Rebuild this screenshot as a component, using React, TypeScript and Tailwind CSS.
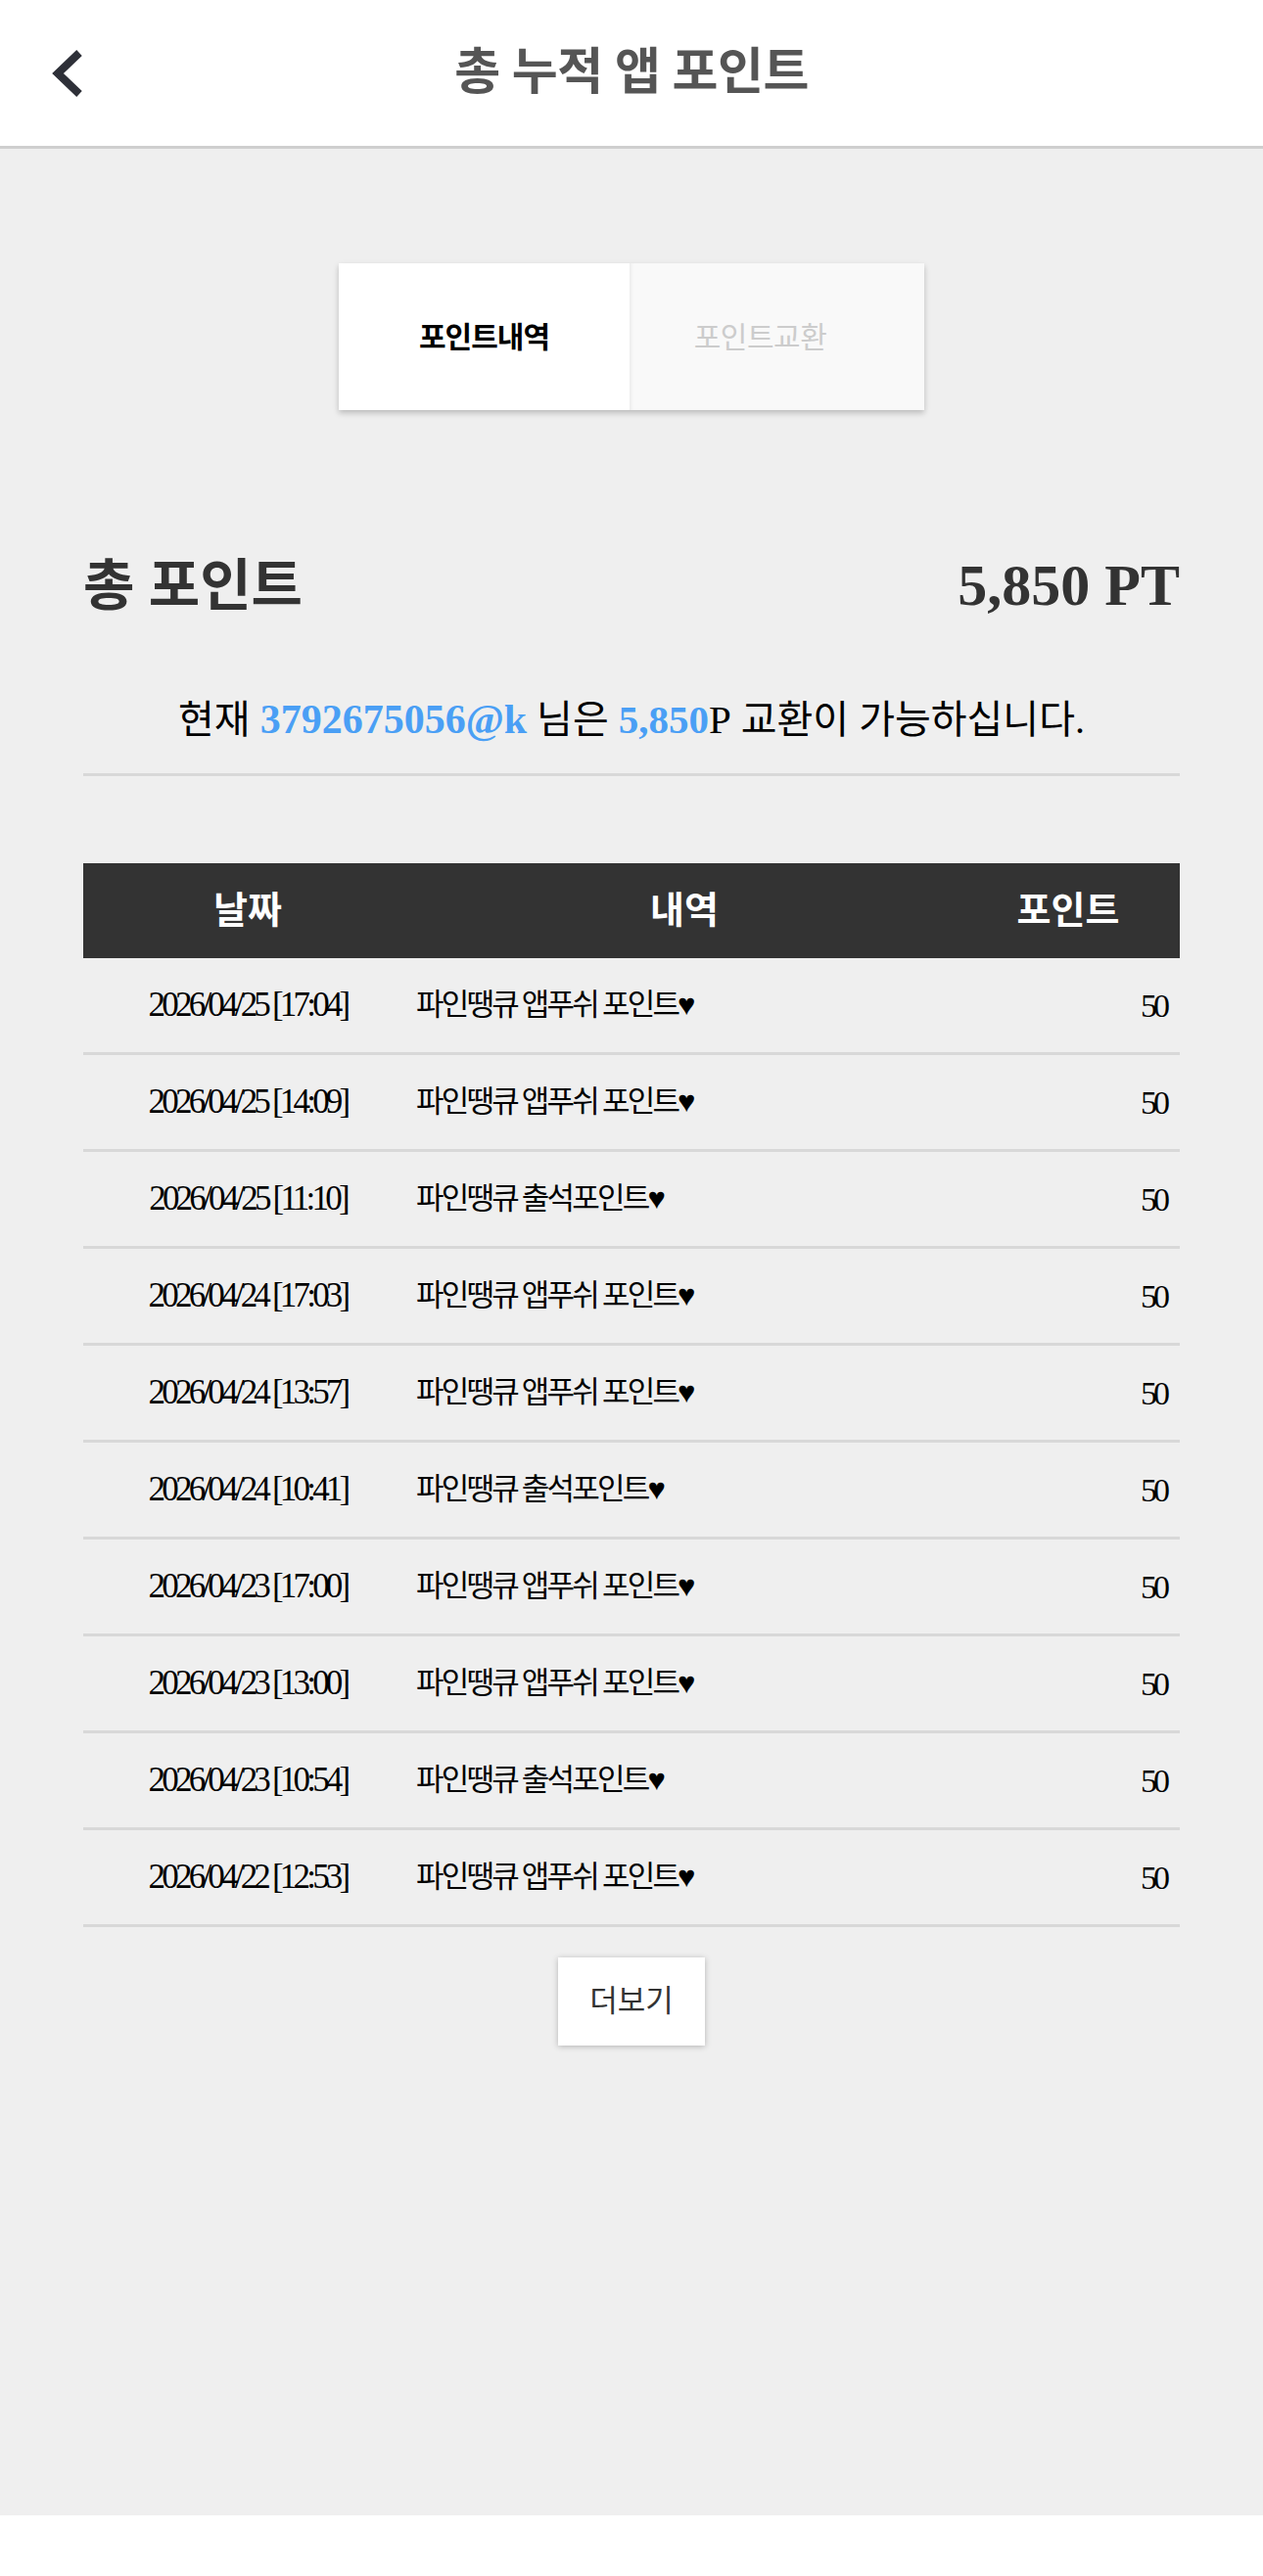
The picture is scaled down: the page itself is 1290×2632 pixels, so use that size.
import React from 'react';

const FONT = '"Liberation Serif", "Noto Sans CJK KR", serif';

const rows = [
  { date: '2026/04/25 [17:04]', text: '파인땡큐 앱푸쉬 포인트♥', point: 50 },
  { date: '2026/04/25 [14:09]', text: '파인땡큐 앱푸쉬 포인트♥', point: 50 },
  { date: '2026/04/25 [11:10]', text: '파인땡큐 출석포인트♥', point: 50 },
  { date: '2026/04/24 [17:03]', text: '파인땡큐 앱푸쉬 포인트♥', point: 50 },
  { date: '2026/04/24 [13:57]', text: '파인땡큐 앱푸쉬 포인트♥', point: 50 },
  { date: '2026/04/24 [10:41]', text: '파인땡큐 출석포인트♥', point: 50 },
  { date: '2026/04/23 [17:00]', text: '파인땡큐 앱푸쉬 포인트♥', point: 50 },
  { date: '2026/04/23 [13:00]', text: '파인땡큐 앱푸쉬 포인트♥', point: 50 },
  { date: '2026/04/23 [10:54]', text: '파인땡큐 출석포인트♥', point: 50 },
  { date: '2026/04/22 [12:53]', text: '파인땡큐 앱푸쉬 포인트♥', point: 50 },
];

function Header() {
  return (
    <header className="grid h-[152px] grid-cols-[1fr_auto_1fr] items-center border-b-[3px] border-[#cfcfcf] bg-white">
      <button className="flex items-center pl-[53px]" aria-label="back">
        <svg width="32" height="48" viewBox="0 0 32 48" fill="none">
          <polyline points="28,3 6,24 28,45" stroke="#2e3038" strokeWidth="8" strokeLinejoin="miter" />
        </svg>
      </button>
      <h1 className="text-[51px] font-bold tracking-[-0.5px] text-[#555555]">총 누적 앱 포인트</h1>
      <div />
    </header>
  );
}

function Tabs() {
  return (
    <div className="mx-auto mt-[117px] flex h-[150px] w-[598px] shadow-[0_3px_6px_rgba(0,0,0,0.22)]">
      <button className="flex w-[297px] items-center justify-center bg-white text-[30px] font-bold tracking-[-1px] text-black">
        포인트내역
      </button>
      <button className="flex flex-1 items-center justify-center bg-[#f9f9f9] pr-[34px] text-[30px] tracking-[-0.5px] text-[#cccccc] shadow-[inset_4px_0_4px_-3px_rgba(0,0,0,0.08)]">
        포인트교환
      </button>
    </div>
  );
}

export default function App() {
  return (
    <div className="min-h-[2632px] bg-white" style={{ fontFamily: FONT }}>
      <div className="h-[2570px] bg-[#efefef]">
        <Header />
        <Tabs />

        <div className="px-[85px]">
          <div className="mt-[137px] flex h-[60px] items-baseline justify-between">
            <span className="text-[57px] font-bold text-[#333333]">총 포인트</span>
            <span className="text-[60px] font-bold leading-none text-[#333333]">5,850 PT</span>
          </div>

          <p className="mt-[95px] flex h-[48px] items-center justify-center text-[40px] text-black">
            <span>
              현재{' '}
              <b className="text-[42px] font-bold text-[#4a9ff5]">3792675056@k</b> 님은{' '}
              <b className="text-[41px] font-bold text-[#4a9ff5]">5,850</b>
              <span className="text-[41px]">P</span> 교환이 가능하십니다.
            </span>
          </p>

          <div className="mt-[31px] h-[3px] bg-[#d8d8d8]" />

          <div className="mt-[89px]">
            <div className="grid h-[97px] grid-cols-[336px_1fr_228px] items-center bg-[#333333] text-[38px] font-bold text-white">
              <span className="text-center">날짜</span>
              <span className="text-center">내역</span>
              <span className="text-center">포인트</span>
            </div>
            {rows.map((r, i) => (
              <div
                key={i}
                className="grid h-[99px] grid-cols-[336px_1fr_228px] items-center border-b-[3px] border-[#d8d8d8] text-black"
              >
                <span className="text-center text-[35px] tracking-[-3.8px]">{r.date}</span>
                <span className="pl-[4px] text-[31px] tracking-[-2.8px]">{r.text}</span>
                <span className="pr-[14px] text-right text-[34px] tracking-[-4px]">{r.point}</span>
              </div>
            ))}
          </div>

          <div className="mt-[31px] flex justify-center">
            <button className="h-[90px] w-[150px] bg-white text-[31px] text-[#333333] shadow-[0_1px_6px_rgba(0,0,0,0.25)]">
              더보기
            </button>
          </div>
        </div>
      </div>
    </div>
  );
}
